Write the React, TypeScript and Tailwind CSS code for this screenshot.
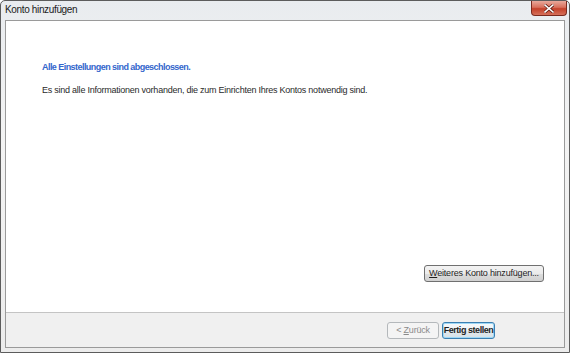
export default function App() {
  return (
    <div className="w-[570px] h-[353px] bg-white">
      <div
        className="w-[570px] h-[353px] flex flex-col rounded-t-[5px] border border-[#5c5c5c] bg-[linear-gradient(180deg,#e9ecef_0%,#f3f3f3_40%,#ececec_100%)] text-[#1e1e1e]"
        style={{ fontFamily: '"Liberation Sans", Arial, sans-serif' }}
      >
        <div className="h-[19px] flex items-start justify-between">
          <div className="pl-[4px] pt-[3px] text-[10px] leading-[12px] tracking-[-0.35px] text-[#1b1b1b]">Konto hinzufügen</div>
          <CloseButton />
        </div>
        <div className="flex-1 mx-[4px] mb-[4px] border border-[#9a9a9a] flex flex-col">
          <div className="flex-1 bg-white pl-[36px] pt-[41px] flex flex-col">
            <div className="text-[9px] leading-[11px] font-bold tracking-[-0.55px] text-[#3366cc]">Alle Einstellungen sind abgeschlossen.</div>
            <div className="mt-[12px] text-[9px] leading-[11px] tracking-[-0.24px] text-[#2a2a2a]">
              Es sind alle Informationen vorhanden, die zum Einrichten Ihres Kontos notwendig sind.
            </div>
            <div className="flex-1" />
            <div className="flex justify-end pr-[20px] pb-[30px]">
              <button
                type="button"
                className="h-[17px] w-[120px] whitespace-nowrap rounded-[3px] border border-[#707070] bg-[linear-gradient(180deg,#f3f3f3_0%,#ebebeb_50%,#dddddd_51%,#d0d0d0_100%)] text-[9px] leading-[15px] tracking-[-0.2px] text-[#1e1e1e]"
              >
                <span className="underline">W</span>eiteres Konto hinzufügen...
              </button>
            </div>
          </div>
          <div className="h-[35px] border-t border-[#c4c4c4] bg-[#f0f0f0] flex items-center justify-end gap-[3px] pr-[69px]">
            <button
              type="button"
              disabled
              className="h-[17px] w-[52px] whitespace-nowrap rounded-[3px] border border-[#b4b8bb] bg-[#f4f4f4] text-[9px] leading-[15px] tracking-[-0.2px] text-[#8a8a8a]"
            >
              &lt; <span className="underline">Z</span>urück
            </button>
            <button
              type="button"
              className="h-[17px] w-[53px] whitespace-nowrap rounded-[3px] border border-[#3c7fb1] bg-[linear-gradient(180deg,#f7fafc_0%,#edf2f5_50%,#e2e9ee_51%,#d8e2e8_100%)] text-[9px] leading-[15px] font-bold tracking-[-0.45px] text-[#1e1e1e] shadow-[inset_0_0_0_1px_#9ed8f6]"
            >
              Fertig stellen
            </button>
          </div>
        </div>
      </div>
    </div>
  );
}

function CloseButton() {
  return (
    <div className="mr-[2px] w-[36px] h-[15px] rounded-b-[4px] border border-t-0 border-[#7a2a1e] bg-[linear-gradient(180deg,#e9a99b_0%,#d8705c_45%,#c4412a_55%,#d5705a_100%)] flex items-center justify-center">
      <svg width="10" height="9" viewBox="0 0 10 9">
        <path d="M1 1 L9 8 M9 1 L1 8" stroke="#5a1a10" strokeWidth="3" strokeLinecap="square" />
        <path d="M1 1 L9 8 M9 1 L1 8" stroke="#ffffff" strokeWidth="1.6" strokeLinecap="square" />
      </svg>
    </div>
  );
}
